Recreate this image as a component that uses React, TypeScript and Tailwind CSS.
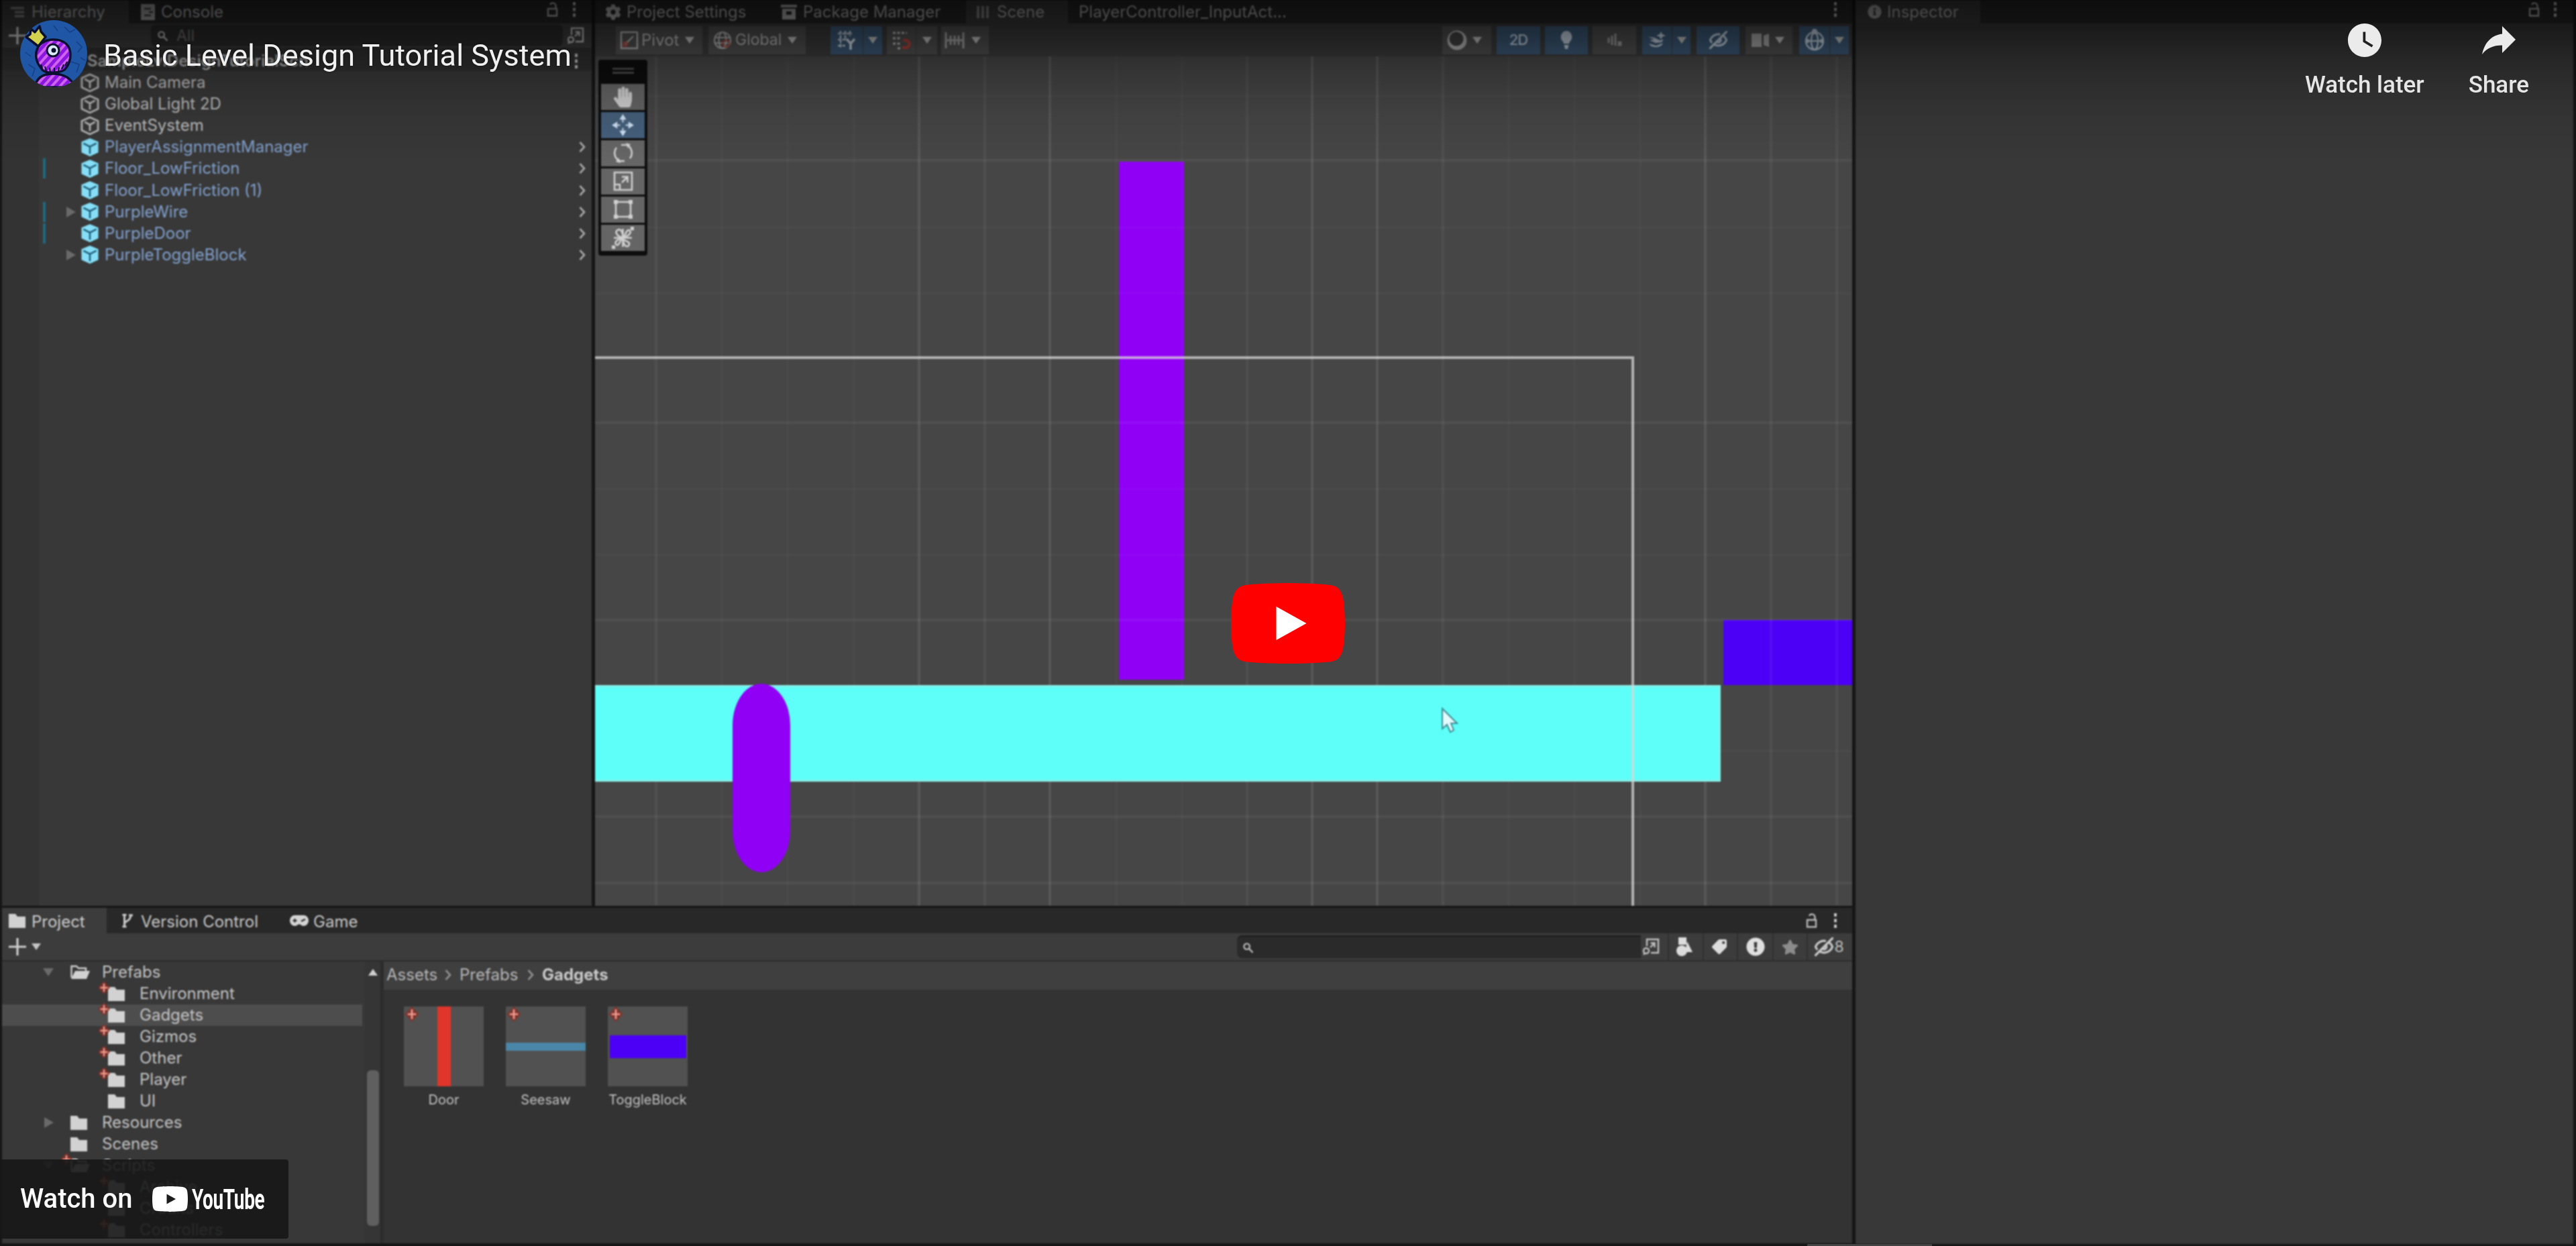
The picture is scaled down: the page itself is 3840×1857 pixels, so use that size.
import React from "react";
import { FaHandPaper, FaCog, FaTag, FaStar, FaInfoCircle, FaExclamationCircle } from "react-icons/fa";
import { MdWatchLater } from "react-icons/md";
import { EyeOff } from "lucide-react";

type P = { className?: string };

/* ---------- small icons ---------- */

const Kebab = ({ className = "" }: P) => (
  <svg viewBox="0 0 6 24" className={`h-[24px] w-[6px] ${className}`} fill="#c4c4c4">
    <rect x="1" y="1" width="4" height="5" /><rect x="1" y="9.5" width="4" height="5" /><rect x="1" y="18" width="4" height="5" />
  </svg>
);

const Padlock = ({ className = "" }: P) => (
  <svg viewBox="0 0 20 24" className={`h-[24px] w-[20px] ${className}`} fill="none" stroke="#b8b8b8" strokeWidth="2.4">
    <path d="M3 11H16V21.500H3Z" /><path d="M14.500 11V7A4.500 4.500 0 0 0 6 5" />
  </svg>
);

const Caret = ({ className = "" }: P) => (
  <svg viewBox="0 0 14 10" className={`h-[10px] w-[14px] ${className}`} fill="#c4c4c4"><path d="M0 0H14L7 10Z" /></svg>
);

const Tri = ({ open = false }: { open?: boolean }) => (
  <svg viewBox="0 0 16 16" className="h-[16px] w-[16px]" fill="#6a6a6a">
    {open ? <path d="M0 2H16L8 14Z" /> : <path d="M2 0L16 8L2 16Z" />}
  </svg>
);

const Plus = () => (
  <svg viewBox="0 0 26 26" className="h-[26px] w-[26px]" stroke="#cfcfcf" strokeWidth="3.200"><path d="M13 0V26M0 13H26" /></svg>
);

const Cube = ({ blue = false }: { blue?: boolean }) =>
  blue ? (
    <svg viewBox="0 0 30 30" className="h-[29px] w-[30px]">
      <path d="M15 1L28 6.500V23L15 29L2 23V6.500Z" fill="#86dff7" />
      <path d="M5 9L15 14L25 9M15 14V25" stroke="#1f5d78" strokeWidth="2.600" fill="none" />
    </svg>
  ) : (
    <svg viewBox="0 0 30 30" className="h-[29px] w-[30px]" fill="none" stroke="#b5b5b5" strokeWidth="3" strokeLinejoin="round">
      <path d="M15 2L27.500 7.500V22L15 28L2.500 22V7.500Z" /><path d="M7 9L15 13.500L23 9M15 13.500V23" />
    </svg>
  );

const Folder = () => (
  <svg viewBox="0 0 25 22" className="h-[22px] w-[25px]" fill="#d2d2d2"><path d="M0 1H10L13 5H25V22H0Z" /></svg>
);

const OpenFolder = () => (
  <svg viewBox="0 0 29 22" className="h-[22px] w-[29px]">
    <path d="M1.500 19V2H9L12 5H23V9" fill="none" stroke="#cfcfcf" strokeWidth="2.400" />
    <path d="M7 9H29L24 21H1Z" fill="#d2d2d2" />
  </svg>
);

const Popout = ({ className = "" }: P) => (
  <svg viewBox="0 0 26 26" className={`h-[26px] w-[26px] ${className}`} fill="none" stroke="#c0c0c0" strokeWidth="2.400">
    <path d="M7 12V2H24V22H13" /><path d="M12 14L18 8M12.500 7.500H18.500V14" /><circle cx="6" cy="19" r="4" /><path d="M2 25L4 22" />
  </svg>
);

const Search = () => (
  <svg viewBox="0 0 18 18" className="h-[17px] w-[17px]" fill="none" stroke="#b8b8b8" strokeWidth="2.400">
    <circle cx="7" cy="7" r="4.500" /><path d="M10.500 10.500L16.500 16.500" />
  </svg>
);

const Branch = () => (
  <svg viewBox="0 0 18 24" className="h-[24px] w-[18px]" fill="none" stroke="#c8c8c8" strokeWidth="3">
    <path d="M4.500 2V22M4.500 17C4.500 12 14 14 14 3" /><path d="M1.500 3.500H7.500M1.500 21H7.500M11 4H17" />
  </svg>
);

const Gamepad = () => (
  <svg viewBox="0 0 28 16" className="h-[16px] w-[28px]">
    <path d="M7.500 0H20.500A7.500 8 0 0 1 20.500 16C17 16 16.500 13.500 14 13.500S11 16 7.500 16A7.500 8 0 0 1 7.500 0Z" fill="#d4d4d4" />
    <path d="M4.500 8H10.500M7.500 5V11" stroke="#2a2a2a" strokeWidth="2" /><path d="M17 9L23 6" stroke="#2a2a2a" strokeWidth="2.500" />
  </svg>
);

const HierarchyGlyph = () => (
  <svg viewBox="0 0 20 18" className="h-[18px] w-[20px]" stroke="#8a8a8a" strokeWidth="3.500"><path d="M0 3H20M6 9H20M6 15H20" /></svg>
);

const ConsoleGlyph = () => (
  <svg viewBox="0 0 21 24" className="h-[24px] w-[21px]"><rect width="21" height="24" rx="1" fill="#a8a8a8" /><path d="M5 7H15M12 12H18M5 17H15" stroke="#404040" strokeWidth="2.500" /></svg>
);

const PackageGlyph = () => (
  <svg viewBox="0 0 24 22" className="h-[22px] w-[24px]" fill="#b8b8b8"><rect width="24" height="4" /><path d="M2 6H22V22H2ZM8 10V15H16V10Z" fillRule="evenodd" /></svg>
);

const SceneGlyph = () => (
  <svg viewBox="0 0 20 18" className="h-[18px] w-[20px]" stroke="#8a8a8a" strokeWidth="4"><path d="M3 0V18M10 0V18M17 0V18" /></svg>
);

const RedPlus = ({ className = "" }: P) => (
  <svg viewBox="0 0 20 22" className={className}>
    <path d="M10 0L20 11L10 22L0 11Z" fill="#8a2c22" opacity=".75" />
    <path d="M10 4V18M4 11H16" stroke="#f29a90" strokeWidth="2.600" />
  </svg>
);

/* ---------- hierarchy ---------- */

const TabText = ({ children, className = "" }: P & { children: React.ReactNode }) => (
  <span className={`whitespace-nowrap text-[24px] leading-[34px] text-[#b4b4b4] ${className}`}>{children}</span>
);

const hierarchyRows = [
  { name: "Main Camera" },
  { name: "Global Light 2D" },
  { name: "EventSystem" },
  { name: "PlayerAssignmentManager", prefab: true },
  { name: "Floor_LowFriction", prefab: true, bar: true },
  { name: "Floor_LowFriction (1)", prefab: true },
  { name: "PurpleWire", prefab: true, bar: true, arrow: true },
  { name: "PurpleDoor", prefab: true, bar: true },
  { name: "PurpleToggleBlock", prefab: true, arrow: true },
];

const Hierarchy = () => (
  <section className="flex w-[879px] flex-col bg-[#383838]">
    <div className="flex h-[35px] items-center bg-[#282828]">
      <div className="flex h-full w-[189px] items-center bg-[#3c3c3c] pl-[13px]">
        <HierarchyGlyph />
        <TabText className="ml-[11px]">Hierarchy</TabText>
      </div>
      <div className="ml-[18px] flex items-center">
        <ConsoleGlyph />
        <TabText className="ml-[9px]">Console</TabText>
      </div>
      <Padlock className="ml-auto -mt-[8px]" />
      <Kebab className="mr-[23px] ml-[19px] -mt-[8px]" />
    </div>
    <div className="flex h-[36px] items-center bg-[#3c3c3c] pl-[10px]">
      <Plus />
      <div className="ml-[186px] flex h-[32px] w-[614px] items-center rounded-[6px] bg-[#2a2a2a] pl-[9px]">
        <Search />
        <span className="ml-[12px] text-[23px] text-[#6f6f6f]">All</span>
      </div>
      <Popout className="ml-[6px]" />
    </div>
    <div className="flex h-[34px] items-center bg-[#2f2f2f] pt-[5px] pl-[127px]">
      <span className="w-[380px] overflow-hidden text-[24px] leading-[32px] font-semibold whitespace-nowrap text-[#b0b0b0]">SampleLvlDesignTutorialScn</span>
      <Kebab className="mr-[20px] ml-auto" />
    </div>
    <div className="flex grow">
      <div className="w-[55px] bg-[#333333]" />
      <div className="flex grow flex-col pt-[2px]">
        {hierarchyRows.map((r) => (
          <div key={r.name} className="flex h-[32.1px] items-center">
            <div className={`ml-[6px] h-[30px] w-[4px] ${r.bar ? "bg-[#1f6a80]" : ""}`} />
            <div className="ml-[29px] flex w-[22px] items-center">{r.arrow && <Tri />}</div>
            <Cube blue={r.prefab} />
            <span className={`ml-[7px] text-[24px] leading-[32px] whitespace-nowrap ${r.prefab ? "text-[#7f9dc6]" : "text-[#bcbcbc]"}`}>{r.name}</span>
            {r.prefab && (
              <svg viewBox="0 0 10 16" className="mr-[9px] ml-auto h-[16px] w-[10px]" fill="none" stroke="#a8a8a8" strokeWidth="2.600"><path d="M1.500 1L8 8L1.500 15" /></svg>
            )}
          </div>
        ))}
      </div>
    </div>
  </section>
);

/* ---------- scene ---------- */

const gray = "bg-[#505050]";
const blue = "bg-[#3d5a77]";

const Btn = ({ className = "", children }: P & { children?: React.ReactNode }) => (
  <div className={`flex h-[42px] items-center ${className}`}>{children}</div>
);

const GridGlyph = () => (
  <svg viewBox="0 0 28 28" className="h-[28px] w-[28px]" stroke="#c6d2de" strokeWidth="2.600" fill="none">
    <path d="M1 4H22M1 13H14M1 22H12M5 0V26M12 0V14M19 0V8" strokeDasharray="5 1.500" />
    <path d="M14 12L20 19L26 12M20 18V28" stroke="#d5e0ea" strokeWidth="3.500" />
  </svg>
);

const MagnetGlyph = () => (
  <svg viewBox="0 0 28 28" className="h-[28px] w-[28px]" stroke="#c4c4c4" strokeWidth="2.800" fill="none">
    <path d="M1 3H22M1 11H12M1 19H12M8 26H13" strokeDasharray="4 2.500" />
    <path d="M15 25H20A5 5 0 0 0 20 14H16" stroke="#b5423a" strokeWidth="4.500" />
  </svg>
);

const RulerGlyph = () => (
  <svg viewBox="0 0 30 24" className="h-[24px] w-[30px]" stroke="#a8a8a8" strokeWidth="3"><path d="M2 0V24M28 0V24M9 5V19M15 5V19M21 5V19M2 12H28" /></svg>
);

const SceneToolbar = () => (
  <div className="flex h-[49px] items-center bg-[#3c3c3c] pl-[31px]">
    <Btn className={`w-[129px] pl-[6px] ${gray}`}>
      <svg viewBox="0 0 28 28" className="h-[28px] w-[28px]" fill="none" stroke="#b8b8b8" strokeWidth="2.400"><rect x="2" y="2" width="24" height="24" /><path d="M8 20L20 8" /><circle cx="8" cy="20" r="3" stroke="#b5483f" /></svg>
      <span className="ml-[4px] w-[61px] text-[24px] text-[#b8b8b8]">Pivot</span>
      <Caret className="ml-[4px]" />
    </Btn>
    <Btn className={`ml-[9px] w-[145px] pl-[6px] ${gray}`}>
      <svg viewBox="0 0 30 30" className="h-[30px] w-[30px]" fill="none" stroke="#b8b8b8" strokeWidth="2.200"><circle cx="15" cy="15" r="12" /><ellipse cx="15" cy="15" rx="5.500" ry="12" /><path d="M3 11H27M3 19H27" /><circle cx="20" cy="20" r="5" stroke="#b5483f" /></svg>
      <span className="ml-[4px] w-[71px] text-[23px] text-[#b8b8b8]">Global</span>
      <Caret className="ml-[7px]" />
    </Btn>
    <Btn className={`ml-[37px] w-[48px] justify-center ${blue}`}><GridGlyph /></Btn>
    <Btn className={`ml-[1px] w-[28px] justify-center ${blue}`}><Caret /></Btn>
    <Btn className={`ml-[7px] w-[43px] justify-center ${gray}`}><MagnetGlyph /></Btn>
    <Btn className={`ml-[1px] w-[31px] justify-center ${gray}`}><Caret /></Btn>
    <Btn className={`ml-[6px] w-[71px] pl-[5px] ${gray}`}><RulerGlyph /><Caret className="ml-[10px]" /></Btn>

    <Btn className={`ml-auto w-[73px] pl-[7px] ${gray}`}>
      <svg viewBox="0 0 30 32" className="h-[32px] w-[30px]"><circle cx="15" cy="16" r="14.500" fill="#b8b8b8" /><circle cx="14" cy="14" r="10.500" fill="#444" /></svg>
      <Caret className="ml-[8px]" />
    </Btn>
    <Btn className={`ml-[8px] w-[65px] justify-center text-[22px] font-medium tracking-[-1px] text-[#c6d4e2] ${blue}`}>2D</Btn>
    <Btn className={`ml-[7px] w-[64px] justify-center ${blue}`}>
      <svg viewBox="0 0 18 28" className="h-[28px] w-[18px]" fill="#c6d4e2"><path d="M9 0A8.500 9 0 0 1 14 16L13 19H5L4 16A8.500 9 0 0 1 9 0ZM5.500 21H12.500L11 27H7Z" /></svg>
    </Btn>
    <Btn className={`ml-[7px] w-[65px] justify-center ${gray}`}>
      <svg viewBox="0 0 24 20" className="h-[20px] w-[24px]" fill="none" stroke="#a0a0a0" strokeWidth="3"><path d="M3 6V14M8 3V17M13 0V18M17 12L22 18M22 12L17 18" /></svg>
    </Btn>
    <Btn className={`ml-[9px] w-[44px] justify-center ${blue}`}>
      <svg viewBox="0 0 28 26" className="h-[26px] w-[28px]" fill="#c6d4e2"><path d="M1 8L10 9L18 13L24 12L21 16L12 17L3 13L10 12Z M2 18L13 21L23 17A11 8 0 0 1 2 18Z M20 0L22 4L27 6L22 8L20 12L18 8L13 6L18 4Z" /></svg>
    </Btn>
    <Btn className={`ml-[1px] w-[27px] justify-center ${blue}`}><Caret /></Btn>
    <Btn className={`ml-[9px] w-[64px] justify-center ${blue}`}><EyeOff className="size-[29px] -scale-x-100 text-[#c6d4e2]" strokeWidth={2.600} /></Btn>
    <Btn className={`ml-[9px] w-[70px] pl-[9px] ${gray}`}>
      <svg viewBox="0 0 26 20" className="h-[20px] w-[26px]" fill="#a8a8a8"><path d="M0 0H15V20H0ZM18 3L26 0V20L18 17Z" /></svg>
      <Caret className="ml-[9px]" />
    </Btn>
    <Btn className={`ml-[10px] w-[45px] justify-center ${blue}`}>
      <svg viewBox="0 0 32 34" className="h-[34px] w-[32px]" fill="none" stroke="#c6d4e2" strokeWidth="2.400"><circle cx="16" cy="18" r="13" /><ellipse cx="16" cy="18" rx="5" ry="13" /><path d="M3 18H29" /><circle cx="16" cy="4" r="3" fill="#c6d4e2" /><circle cx="5" cy="18" r="2" fill="#c6d4e2" /><circle cx="27" cy="18" r="2" fill="#c6d4e2" /></svg>
    </Btn>
    <Btn className={`mr-[5px] ml-[1px] w-[28px] justify-center ${blue}`}><Caret /></Btn>
  </div>
);

const Tool = ({ active = false, children }: { active?: boolean; children: React.ReactNode }) => (
  <div className={`flex h-[39.500px] w-full items-center justify-center ${active ? "bg-[#46607c]" : "bg-[#656565]"}`}>{children}</div>
);

const ToolPalette = () => (
  <div className="absolute top-[5px] left-[5px] flex h-[292px] w-[73px] flex-col items-center gap-[2.500px] rounded-[4px] bg-[#0d0d0d] px-[4px]">
    <div className="flex h-[33px] flex-col items-center justify-center gap-[3px]">
      <div className="h-[3px] w-[32px] bg-[#4a4a4a]" />
      <div className="h-[3px] w-[32px] bg-[#4a4a4a]" />
    </div>
    <Tool>
      <FaHandPaper className="size-[31px] text-[#d0d0d0]" />
    </Tool>
    <Tool active>
      <svg viewBox="0 0 32 32" className="h-[33px] w-[33px]" fill="#cfe2f5"><path d="M16 0L21 8H17V12H15V8H11ZM16 32L21 24H17V20H15V24H11ZM0 16L8 11V15H12V17H8V21ZM32 16L24 11V15H20V17H24V21Z" /></svg>
    </Tool>
    <Tool>
      <svg viewBox="0 0 30 30" className="h-[30px] w-[30px]" fill="none" stroke="#d0d0d0" strokeWidth="2.600"><path d="M10 27A13 13 0 0 1 5 7M20 3A13 13 0 0 1 25 23M12 3L20 3" /><path d="M19 0L26 2L22 8Z" fill="#d0d0d0" stroke="none" /><path d="M11 30L4 28L8 22Z" fill="#d0d0d0" stroke="none" /><path d="M10 27H17" /></svg>
    </Tool>
    <Tool>
      <svg viewBox="0 0 30 30" className="h-[30px] w-[30px]" fill="none" stroke="#d0d0d0" strokeWidth="2.600"><path d="M2 2H28V28H2ZM2 20H10V28M13 17L21 9M13 8.500H21.500V17" /></svg>
    </Tool>
    <Tool>
      <svg viewBox="0 0 30 30" className="h-[30px] w-[30px]" fill="none" stroke="#d0d0d0" strokeWidth="2.600"><path d="M4 4H26V26H4Z" /><path d="M1 1H7V7H1ZM23 1H29V7H23ZM1 23H7V29H1ZM23 23H29V29H23Z" fill="#d0d0d0" stroke="none" /></svg>
    </Tool>
    <Tool>
      <svg viewBox="0 0 32 32" className="h-[33px] w-[33px]" fill="none" stroke="#d0d0d0" strokeWidth="2.600"><path d="M16 16C8 14 4 8 8 5S16 6 16 16S20 2 25 5S24 14 16 16S28 20 25 26S16 26 16 16S12 29 7 26S8 18 16 16" /><path d="M3 16H29M16 3V29" /><path d="M27 0H32V5H27ZM0 27H5V32H0Z" fill="#d0d0d0" stroke="none" /></svg>
    </Tool>
  </div>
);

const vLines = [
  [91, 1], [189, 0], [287, 0], [386, 0], [483, 2], [581, 1], [678, 2], [777, 0], [875, 0], [972, 1], [1069, 2], [1166, 2], [1264, 1],
  [1362, 0], [1460, 0], [1558, 0], [1655, 2], [1753, 1], [1851, 1],
];
const hLines = [[59, 0], [155, 1], [255, 0], [353, 0], [546, 1], [645, 0], [743, 0], [840, 1], [1035, 0], [1133, 1], [1232, 1]];
const tone = ["bg-white/[0.02]", "bg-white/[0.05]", "bg-white/[0.09]"];

const SceneCanvas = () => (
  <div className="relative grow overflow-hidden bg-[#464646]">
    <div className="absolute top-[157px] left-[781px] h-[772px] w-[97px] bg-[#8f00f5]" />
    <div className="absolute top-[840px] left-[1682px] h-[97px] w-[200px] bg-[#4c00f5]" />
    {vLines.map(([x, t]) => (
      <div key={x} className={`absolute top-0 h-full w-[4px] ${tone[t]}`} style={{ left: x - 2 }} />
    ))}
    {hLines.map(([y, t]) => (
      <div key={y} className={`absolute left-0 h-[4px] w-full ${tone[t]}`} style={{ top: y - 2 }} />
    ))}
    <div className="absolute top-[937px] left-0 h-[144px] w-[1678px] border-t-[3px] border-r-[3px] border-b-[3px] border-[#86f0e8] bg-[#5efff8]" />
    <div className="absolute top-[447px] left-0 h-[900px] w-[1549px] border-t-[4px] border-r-[4px] border-[#d8d8d8]/75" />
    <div className="absolute top-[935px] left-[205px] h-[281px] w-[86px] rounded-[43px/62px] bg-[#8f00f5]" />
    <svg viewBox="0 0 26 40" className="absolute top-[969px] left-[1261px] h-[42px] w-[26px]">
      <path d="M2 2V32L9 26L14 37L19 34L15 24H24Z" fill="#e4fbfd" stroke="#3c8e96" strokeWidth="2" />
    </svg>
    <ToolPalette />
  </div>
);

const Scene = () => (
  <section className="ml-[5px] flex w-[1874px] flex-col">
    <div className="flex h-[35px] items-center bg-[#282828] pl-[15px]">
      <FaCog className="size-[24px] text-[#b8b8b8]" />
      <TabText className="ml-[8px] w-[230px]">Project Settings</TabText>
      <PackageGlyph />
      <TabText className="ml-[9px] w-[243px]">Package Manager</TabText>
      <div className="flex h-full w-[152px] items-center bg-[#3c3c3c] pl-[15px]">
        <SceneGlyph />
        <TabText className="ml-[11px]">Scene</TabText>
      </div>
      <TabText className="ml-[16px]">PlayerController_InputAct...</TabText>
      <Kebab className="mr-[22px] ml-auto -mt-[8px]" />
    </div>
    <SceneToolbar />
    <SceneCanvas />
  </section>
);

/* ---------- inspector ---------- */

const Inspector = () => (
  <section className="ml-[5px] flex w-[1070px] flex-col bg-[#383838]">
    <div className="flex h-[35px] items-center bg-[#282828]">
      <div className="flex h-full w-[186px] items-center bg-[#3c3c3c] pl-[18px]">
        <FaInfoCircle className="size-[21px] text-[#a8a8a8]" />
        <TabText className="ml-[8px] text-[#909090]">Inspector</TabText>
      </div>
      <Padlock className="ml-auto -mt-[8px]" />
      <Kebab className="mr-[24px] ml-[18px] -mt-[8px]" />
    </div>
  </section>
);

/* ---------- project browser ---------- */

const ProjectTabs = () => (
  <div className="flex h-[38px] items-center bg-[#282828]">
    <div className="flex h-full w-[156px] items-center bg-[#3c3c3c] pl-[10px]">
      <Folder />
      <TabText className="ml-[9px] pt-[4px] text-[#cccccc]">Project</TabText>
    </div>
    <div className="ml-[22px]"><Branch /></div>
    <TabText className="ml-[11px] w-[222px] pt-[4px] text-[#c6c6c6]">Version Control</TabText>
    <Gamepad />
    <TabText className="ml-[7px] pt-[4px] text-[#c6c6c6]">Game</TabText>
    <Padlock className="ml-auto" />
    <Kebab className="mr-[22px] ml-[22px]" />
  </div>
);

const FilterCell = ({ className = "", children }: P & { children: React.ReactNode }) => (
  <div className={`flex h-full items-center justify-center border-l-[2px] border-[#303030] ${className}`}>{children}</div>
);

const ProjectToolbar = () => (
  <div className="flex h-[42px] items-center border-b-[2px] border-[#2c2c2c] bg-[#3c3c3c] pl-[10px]">
    <Plus />
    <Caret className="ml-[8px]" />
    <div className="ml-auto flex h-[34px] w-[602px] items-center rounded-l-[8px] border-t-[2px] border-[#1c1c1c] bg-[#2a2a2a] pl-[8px]">
      <Search />
    </div>
    <div className="flex w-[40px] pl-[2px]"><Popout /></div>
    <FilterCell className="w-[52px] pr-[4px]">
      <svg viewBox="0 0 26 28" className="h-[28px] w-[26px]" fill="#dcdcdc"><rect x="4" y="0" width="12" height="11" /><circle cx="9" cy="20" r="8" /><path d="M17 6L25 22H14Z" /></svg>
    </FilterCell>
    <FilterCell className="w-[51px] pr-[4px]">
      <FaTag className="size-[22px] -scale-x-100 text-[#dcdcdc]" />
    </FilterCell>
    <FilterCell className="w-[53px]"><FaExclamationCircle className="size-[28px] text-[#e0e0e0]" /></FilterCell>
    <FilterCell className="w-[51px]"><FaStar className="size-[25px] text-[#8c8c8c]" /></FilterCell>
    <FilterCell className="mr-[3px] w-[65px]">
      <EyeOff className="size-[30px] -scale-x-100 text-[#c8c8c8]" strokeWidth={2.600} />
      <span className="text-[23px] text-[#bdbdbd]">8</span>
    </FilterCell>
  </div>
);

type Node = { name: string; depth: 0 | 1; added?: boolean; tri?: "open" | "closed"; selected?: boolean };
const tree: Node[] = [
  { name: "Prefabs", depth: 0, tri: "open" },
  { name: "Environment", depth: 1, added: true },
  { name: "Gadgets", depth: 1, added: true, selected: true },
  { name: "Gizmos", depth: 1, added: true },
  { name: "Other", depth: 1, added: true },
  { name: "Player", depth: 1, added: true },
  { name: "UI", depth: 1 },
  { name: "Resources", depth: 0, tri: "closed" },
  { name: "Scenes", depth: 0 },
  { name: "Scripts", depth: 0, tri: "open", added: true },
  { name: "Archive", depth: 1, added: true },
  { name: "Credits", depth: 1 },
  { name: "Controllers", depth: 1, added: true },
];

const TreeRow = ({ n }: { n: Node }) => (
  <div className={`flex h-[32px] w-[537px] shrink-0 items-center ${n.selected ? "bg-[#4d4d4d]" : ""}`}>
    <div className="ml-[61px] flex w-[41px]">{n.tri && <Tri open={n.tri === "open"} />}</div>
    {n.depth === 1 && <div className="w-[56px]" />}
    <div className="relative w-[47px]">
      {n.tri === "open" ? <OpenFolder /> : <Folder />}
      {n.added && <RedPlus className="absolute -top-[8px] -left-[16px] h-[20px] w-[20px]" />}
    </div>
    <span className="text-[24px] leading-[32px] text-[#c2c2c2]">{n.name}</span>
  </div>
);

const Crumb = () => (
  <svg viewBox="0 0 10 16" className="h-[16px] w-[10px]" fill="none" stroke="#8f8f8f" strokeWidth="2.600"><path d="M1.500 1L8 8L1.500 15" /></svg>
);

const Asset = ({ name, children }: { name: string; children: React.ReactNode }) => (
  <div className="flex w-[119px] flex-col items-center">
    <div className="relative flex h-[119px] w-[119px] items-center justify-center bg-[#515151]">
      {children}
      <RedPlus className="absolute top-0 left-[1px] h-[23px] w-[22px]" />
    </div>
    <span className="mt-[7px] text-[20px] leading-[26px] text-[#c0c0c0]">{name}</span>
  </div>
);

const Project = () => (
  <section className="mt-[3px] flex h-[500px] w-[2758px] flex-col bg-[#383838]">
    <ProjectTabs />
    <ProjectToolbar />
    <div className="flex h-[420px]">
      <div className="flex w-[541px] flex-col overflow-hidden">
        {tree.map((n) => <TreeRow key={n.name} n={n} />)}
      </div>
      <div className="flex w-[23px] flex-col items-center bg-[#353535]">
        <svg viewBox="0 0 14 10" className="mt-[11px] h-[10px] w-[14px]" fill="#cfcfcf"><path d="M7 0L14 10H0Z" /></svg>
        <div className="mt-[141px] h-[232px] w-[18px] rounded-[6px] bg-[#5f5f5f]" />
      </div>
      <div className="w-[5px] bg-[#2c2c2c]" />
      <div className="flex grow flex-col bg-[#333333]">
        <div className="flex h-[42px] items-center bg-[#3f3f3f] pb-[3px] pl-[4px] text-[24px] text-[#b4b4b4]">
          <span className="w-[87px]">Assets</span>
          <Crumb />
          <span className="ml-[12px] w-[101px]">Prefabs</span>
          <Crumb />
          <span className="ml-[12px] font-bold text-[#c8c8c8]">Gadgets</span>
        </div>
        <div className="mt-[25px] ml-[30px] flex gap-[33px]">
          <Asset name="Door"><div className="h-full w-[20px] bg-[#e0352a]" /></Asset>
          <Asset name="Seesaw"><div className="h-[12px] w-full bg-[#4a86a8]" /></Asset>
          <Asset name="ToggleBlock"><div className="h-[34px] w-[114px] bg-[#4c00f5]" /></Asset>
        </div>
      </div>
    </div>
  </section>
);

/* ---------- player chrome ---------- */

const Avatar = () => (
  <svg viewBox="0 0 100 100" className="h-[100px] w-[100px] rounded-full">
    <defs>
      <pattern id="stripes" width="9" height="9" patternUnits="userSpaceOnUse" patternTransform="rotate(42)">
        <rect width="9" height="9" fill="#8a16e0" /><rect width="4" height="9" fill="#cf62ec" />
      </pattern>
    </defs>
    <rect width="100" height="100" fill="#1f56a5" />
    <path d="M66 10L74 18L82 14M84 32L92 40L86 48M12 66L22 72L18 84M76 62L88 66L84 78M50 8L56 16M8 48L16 54M90 56L97 60" stroke="#163f85" strokeWidth="1.500" fill="none" />
    <path d="M22 100C24 86 34 80 49 80S76 86 82 100Z" fill="url(#stripes)" stroke="#0b1030" strokeWidth="3.500" />
    <path d="M24 48C26 36 36 29 50 29C66 29 75 38 75 52C75 62 71 68 68 72C64 79 40 80 34 75C30 70 22 62 24 48Z" fill="url(#stripes)" stroke="#0b1030" strokeWidth="3.500" />
    <path d="M31 66L33 72M37 69L39 76M44 71L45 78M51 71V78M58 70L57 77M65 66L62 73M70 62L67 68" stroke="#0b1030" strokeWidth="2" />
    <circle cx="49" cy="45" r="10.500" fill="#0b1030" /><circle cx="49" cy="45" r="7.500" fill="#dbe9fb" /><circle cx="50" cy="45" r="3.500" fill="#0b1030" />
    <path d="M9 25L15 21L16 13L22 18L29 9L31 17L38 25L27 39Z" fill="#d3d24e" stroke="#0b1030" strokeWidth="3.500" strokeLinejoin="round" />
  </svg>
);

const PlayerTop = () => (
  <header className="absolute inset-x-0 top-0 flex items-start">
    <div className="mt-[30px] ml-[30px]"><Avatar /></div>
    <h1 className="mt-[55px] ml-[24px] text-[45px] leading-[56px] tracking-[0.050px] whitespace-nowrap text-[#f0f0f0] [text-shadow:0_0_4px_rgba(0,0,0,.5)]">Basic Level Design Tutorial System</h1>
    <div className="mt-[30px] mr-[70px] ml-auto flex gap-[66px] text-[35px] font-medium text-[#e6e6e6]">
      <div className="flex flex-col items-center">
        <MdWatchLater className="size-[60px] text-[#ebebeb]" />
        <span className="mt-[15px] leading-[44px]">Watch later</span>
      </div>
      <div className="flex flex-col items-center">
        <svg viewBox="0 0 50 42" className="mt-[9px] h-[42px] w-[50px]" fill="#ebebeb"><path d="M30 0L50 20L30 40V28.500C16 28.500 7 33 0 42C3 28 11 14 30 11.500Z" /></svg>
        <span className="mt-[24px] leading-[44px]">Share</span>
      </div>
    </div>
  </header>
);

const PlayButton = () => (
  <div className="absolute inset-0 flex items-center justify-center">
    <svg viewBox="0 0 68 48" className="h-[120px] w-[170px]">
      <path d="M66.520 7.740c-.780-2.930-2.490-5.410-5.420-6.190C55.790.130 34 0 34 0S12.210.130 6.900 1.550c-2.930.780-4.630 3.260-5.420 6.190C.060 13.050 0 24 0 24s.060 10.950 1.480 16.260c.780 2.930 2.490 5.410 5.420 6.190C12.210 47.870 34 48 34 48s21.790-.130 27.100-1.550c2.930-.780 4.640-3.260 5.420-6.190C67.940 34.950 68 24 68 24s-.060-10.950-1.480-16.260z" fill="#f00" />
      <path d="M45 24 27 14v20" fill="#fff" />
    </svg>
  </div>
);

const WatchOn = () => (
  <div className="absolute top-[1728px] left-0 flex h-[118px] w-[430px] items-center rounded-r-[4px] bg-[#171717]/90 pl-[30px]">
    <span className="w-[197px] text-[40px] font-medium whitespace-nowrap text-white">Watch on</span>
    <svg viewBox="0 0 53 38" className="h-[38px] w-[53px]">
      <path d="M51.800 6.100C51.200 3.800 49.500 2.100 47.200 1.400 43 .3 26.500 0 26.500 0S10 .3 5.800 1.400C3.500 2.100 1.800 3.800 1.200 6.100 0 10.200 0 19 0 19S0 27.800 1.200 31.900C1.800 34.200 3.500 35.900 5.800 36.600 10 37.700 26.500 38 26.500 38S43 37.700 47.200 36.600C49.500 35.900 51.200 34.200 51.800 31.900 53 27.800 53 19 53 19S53 10.200 51.800 6.100Z" fill="#fff" />
      <path d="M21.500 11.500V26.500L35 19Z" fill="#1c1c1c" />
    </svg>
    <span className="ml-[6px] w-[108px] origin-left scale-x-[0.650] text-[43px] leading-[44px] font-bold tracking-[-0.500px] text-white">YouTube</span>
  </div>
);

export default function App() {
  return (
    <main className="relative h-[1857px] w-[3840px] overflow-hidden bg-[#161616] font-['Roboto',sans-serif]">
      <div className="flex h-[1854px] w-full pl-[3px] font-['Inter',sans-serif] blur-[1.2px]">
        <div className="flex w-[2758px] flex-col">
          <div className="flex h-[1350px]">
            <Hierarchy />
            <Scene />
          </div>
          <Project />
        </div>
        <Inspector />
      </div>
      <div className="flex h-[3px]"><div className="ml-[2694px] w-[186px] bg-[#444444]" /></div>
      <div className="absolute inset-x-0 top-0 h-[240px] bg-[linear-gradient(to_bottom,rgba(0,0,0,.66)_0px,rgba(0,0,0,.55)_35px,rgba(0,0,0,.44)_60px,rgba(0,0,0,.34)_80px,rgba(0,0,0,.23)_110px,rgba(0,0,0,.15)_140px,rgba(0,0,0,.07)_175px,rgba(0,0,0,0)_235px)]" />
      <PlayButton />
      <PlayerTop />
      <WatchOn />
    </main>
  );
}
